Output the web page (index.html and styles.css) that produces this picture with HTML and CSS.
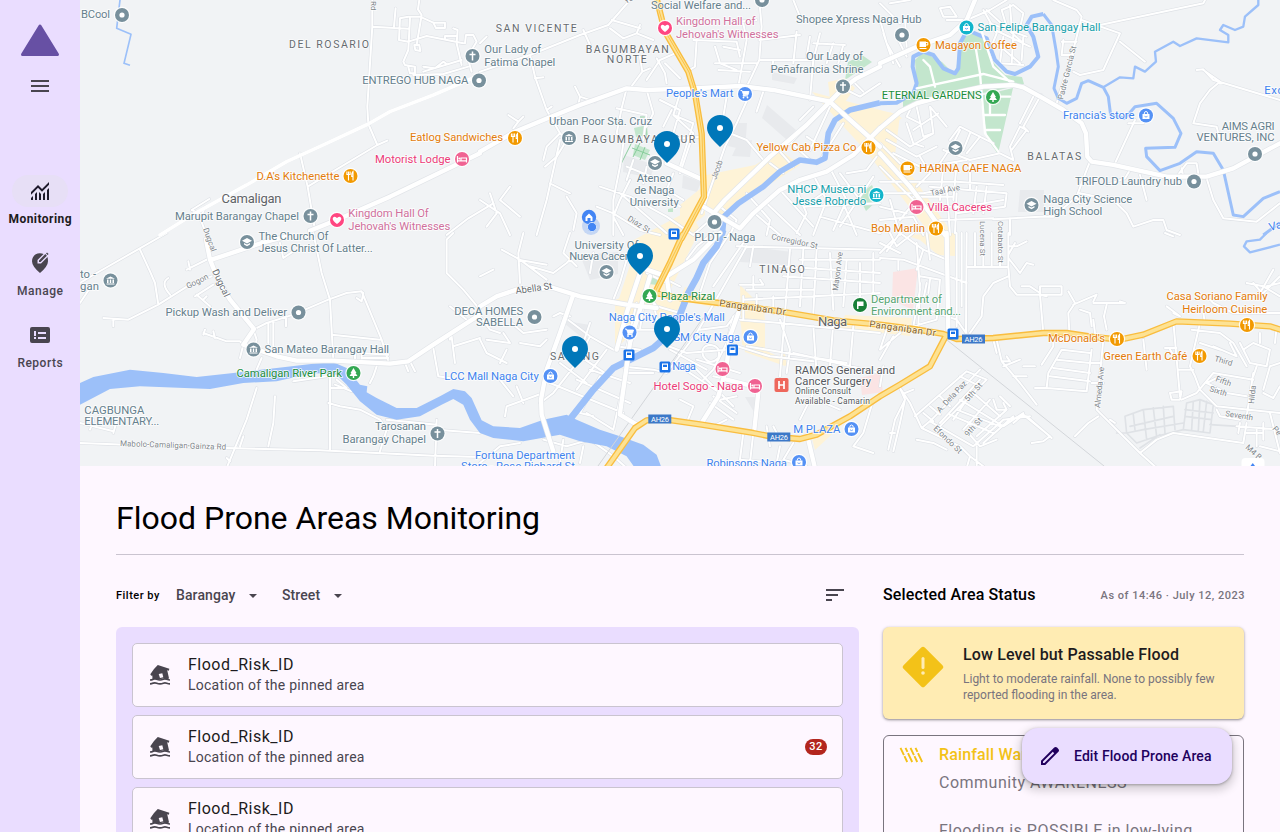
FILE: index.html
```html
<!DOCTYPE html>
<html lang="en">
<head>
<meta charset="utf-8">
<title>Flood Prone Areas Monitoring</title>
<link rel="stylesheet" href="styles.css">
</head>
<body>
<div class="app">
  <nav class="rail">
    <svg class="logo" width="40" height="34" viewBox="0 0 40 34"><path d="M20 3 37.5 31.500H2.500Z" fill="#6750a4" stroke="#6750a4" stroke-width="3" stroke-linejoin="round"/></svg>
    <svg class="menu" width="24" height="24" viewBox="0 0 24 24"><path d="M3 6h18v2H3zM3 11h18v2H3zM3 16h18v2H3z"/></svg>
    <div class="dest active"><span class="pill"><svg width="24" height="24" viewBox="0 0 24 24"><path d="M3 21v-2l2-2v4zM7 21v-6l2-2v8zM11 21v-8l2 2v6zM15 21v-6l2-2v8zM19 21V11l2-2v12zM3 15.800V13l7-7 4 4 7-7v2.800l-7 7-4-4z"/></svg></span><span class="dest-label">Monitoring</span></div>
    <div class="dest"><span class="pill"><svg width="24" height="24" viewBox="0 0 24 24"><path d="M12 22Q4 15.200 4 10.200A8 8 0 0 1 15.600 3L9.500 9v3.500H13L19.500 6Q20 8 20 10.200 20 15.200 12 22Z"/><path d="M11 11V9.400L17.300 3.100l1.600 1.600L12.600 11zM18 2.400l1-1 1.600 1.600-1 1z"/></svg></span><span class="dest-label">Manage</span></div>
    <div class="dest"><span class="pill"><svg width="24" height="24" viewBox="0 0 24 24"><path fill-rule="evenodd" d="M4 4h16a2 2 0 0 1 2 2v12a2 2 0 0 1-2 2H4a2 2 0 0 1-2-2V6a2 2 0 0 1 2-2ZM6 8v5h2V8zM6 14v2h2v-2zM10 9v2h8V9zM10 14v2h8v-2z"/></svg></span><span class="dest-label">Reports</span></div>
  </nav>

  <main class="main">
    <svg class="map" width="1200" height="466" viewBox="80 0 1200 466">
      <defs>
        <g id="minor">
          <path transform="translate(80 0) scale(.3333)" d="M877 0V80L862 320 865 372M877 80 985 86M947 25 942 80M865 372 892 435M922 422 892 435 683 560M660 460 683 560 705 690M335 630 388 597M335 630 365 645 375 622M355 640 372 685M1018 0 1014 28 1025 45 1010 135M960 55 985 50 1020 50 1060 68H1095V84H1068L1060 68M960 55 957 120 985 125 1040 108 1090 118 1150 130M990 55 985 150 970 185 975 195 1005 200V220H990L985 200M1120 85 1133 90 1130 130 1145 195M1095 118V108H1130M1155 130 1158 105 1180 105 1190 125 1175 150M1030 215 1145 180M1030 200 1065 205 1090 185 1100 192M1000 225 1090 222 1165 200M1165 180 1175 215M1003 135H1018L1021 153 1006 150ZM1100 705 1165 655 1240 610"/>
          <path transform="translate(480 0) scale(.3333)" d="M0 215 150 165 300 105 385 75 450 0M0 130 20 110M310 90 330 135M150 165 165 230 200 330 240 400M165 235 190 232M200 330 215 320M240 400 200 440 190 480M240 400 260 420 230 470 195 500M85 345 115 365 130 350M115 365 100 385M285 260 300 290 345 305M300 290 295 315M480 170 487 215 450 265M487 215 510 205M530 175 555 220 560 250M555 190 600 235M585 160 540 180 500 240M390 85 430 115 470 100 480 75M395 60 480 85M470 100 520 120M640 120 770 125 780 170M650 120 645 200 620 215M770 60 790 70 800 120 775 260M838 0 845 80 838 180 815 230 800 260M770 65 830 60M705 140 720 190 770 210M705 190 830 190M715 210 810 215M730 140 780 150M838 120 960 105M838 180 1000 180 990 300M950 95 940 190M990 110 980 170M1020 100 1000 180M1060 130 1040 190M1090 135 1075 190M1000 130 1095 135M880 180 875 215M940 0 960 50 1010 70M1100 270 1140 290 1200 250M1120 245 1150 275M440 265 425 325 410 400 430 430 420 500 400 600 400 705M410 325 500 345 490 420M500 270 520 340 500 380M540 300 600 330 580 400 560 490M600 280 580 345 640 370M580 345 640 400 600 520M640 370 600 500M600 415 670 410M575 330 550 380M740 290 730 350 705 400M815 270 770 370 735 440 700 540 665 640M850 275 830 335M1000 320 960 360M700 380 800 420 850 480M1050 320 990 450M1020 340 920 440M980 410 1040 450M930 425 990 480M900 455 940 500M870 490 910 520M1090 370 1020 480M1190 470 1160 510 1100 520M360 560 450 590 560 650 640 705M420 600 400 650 430 705M450 540 420 600M540 570 600 620M400 640 480 690 540 705M350 620 400 640M420 580 560 700M580 520 560 570 610 600M440 500 540 540M460 480 440 540M500 500 490 550M240 420 200 600 170 705M280 690 290 640 260 590M0 600 60 640 90 705M30 580 50 640 20 680M90 560 60 600 120 650M210 550 270 580M690 660 640 705M720 620 770 660 750 705M800 580 870 660 860 705M830 645 900 705M860 610 960 705M900 570 1000 680M940 550 980 640 950 700M1000 525 1040 600 1000 705M1050 505 1100 600 1060 690M970 620 1200 610M1020 650 1200 700M1030 560 1150 560M1080 520 1140 600M1060 560 1000 600M1090 610 1130 705M1180 530 1080 680"/>
          <path transform="translate(880 0) scale(.3333)" d="M0 60 20 130 60 200M30 10 90 0M0 10 60 70M10 100 40 190M50 110 80 170M75 55 80 140M180 25 210 20 230 50 190 50ZM200 60 260 60M260 60 330 30 380 0M310 30 350 100 330 150M365 30 400 15 430 40 420 85 380 80ZM390 15 395 80M330 70 440 110M345 90 450 140M350 130 420 190M370 110 360 190 430 195M400 100 395 190M430 110 425 180M320 30 430 130M520 0 590 30 605 50 580 150 530 310M660 75 970 10 975 0M605 60 720 100 670 210 600 225 580 215M720 125 795 185M545 125H590M550 120 545 165H580M630 485 620 510 590 590M765 360 705 490M745 370H790M750 510 735 535 680 555M780 525 800 600M950 210 970 208 1000 240 1200 300M970 210 1020 245 990 270 960 310 940 370 1010 380 1020 420M890 530 920 490 950 490 955 520M910 530 905 505M980 535 1000 600 1030 655 1130 665M1200 610 1130 665M100 310 80 350 120 370M110 320 130 410 160 400 150 320M80 370 100 430 130 440M150 320 200 380M175 340 100 390M210 420 240 380 280 400 340 430M240 390 220 430 180 490M270 400 250 450M300 410 260 460M190 450 270 480 360 460 400 480 390 440 420 380 440 390 395 450M480 290 430 380 445 395M460 290 420 370M465 285H485M0 430 60 490M20 420 110 470 170 440M40 460 140 510M20 390 90 440 160 400M120 470 150 520 110 560M140 500 260 480M0 545H230L370 555M0 580 130 580 230 560M190 500 180 600M230 490 220 600M270 490V570M100 590H220M130 620H250L370 600M150 560 380 580 375 620 230 640M200 560 210 705M230 580 225 700M290 560 280 640M320 560 310 640M180 660 340 655M340 658 480 650 520 650 590 590 600 610M600 580 700 600 740 640 760 680 820 660 850 660 860 690 900 705M0 620 80 640M0 660 100 650 130 705M30 600 60 705M100 610 60 660M390 655V705M0 500 100 600"/>
          <path transform="translate(80 233) scale(.3333)" d="M0 210 30 165M0 150 50 120 190 40 260 0M180 50 210 115 225 150 235 215M70 255 145 260 235 215 330 155 395 130M100 258V280M265 135Q240 150 270 185M390 75 320 110M325 85 330 110M345 190 400 155M350 185 390 220M380 190 370 200M700 0 725 120 750 200 760 380M520 290 560 270 640 245 745 200 800 180 845 175 905 320 925 385M830 195 845 205 850 180M755 305 900 320M565 270V330M580 265V340M618 250V280M370 300 440 325 480 325 500 345M375 290 370 305M400 295 405 315M520 290 530 320 520 360M490 335 480 375M840 360 925 365M845 380V360M825 360V385M845 375H925M1120 0 1100 20 1100 120 1150 170 1200 230M1110 220 1160 260M1115 310 1125 390M1110 300V320M1060 345 1075 430 1110 435M1120 340 1200 315M975 390 985 415M990 385 1005 415M890 400 880 430 870 450M640 445 740 430 770 415M750 430 750 650M750 465H800L770 440M765 455 815 475M745 510 780 520 840 530 900 560 920 590 900 655M1070 560 1065 705M920 560 1070 575M1070 590 1200 600M530 465 500 560 440 705M585 490 580 570 565 640M490 610 480 640M440 675 450 685M0 630 180 637 440 645 720 652 1060 668 1200 672M100 600 110 565 60 550M0 570 100 595M30 590 40 560M600 30 610 75 640 55M545 375 530 410"/>
          <path transform="translate(480 233) scale(.3333)" d="M130 0 115 60 120 150M65 50 120 80 200 140M150 100 220 120 260 90 290 60M115 80 200 95M0 130 40 110M270 0 250 60 290 100M340 60 330 120M440 80 420 150 400 200M0 250 30 290 60 300M20 320 90 330 70 300M95 270 130 300 200 290M120 330 180 340 200 320M0 320 20 360 80 390M60 390 80 350M250 250 330 310 400 350M220 250 240 240 270 250M330 270 310 330 290 390 220 480 180 510M330 310 300 370 390 430M380 350 290 470M240 390 320 450M210 450 430 540M290 440 450 510M330 410 450 450M190 480 80 520 75 550M110 460 130 510M60 440 100 490M320 540 400 590M430 450 400 590M360 430 300 540M340 550 300 540M420 400 520 410 560 420M440 420 520 420M410 340 480 350M470 210 440 340M490 220 480 290M520 210 540 300M500 180 530 220 600 240M470 290 540 290M540 130 600 160M500 120 560 150M700 0 650 40 620 80M750 0 690 90 660 180M800 40 720 180 650 300 560 420M790 30 700 160M660 290 740 280 770 240M770 40 1200 50M820 40 810 100M930 50 900 430M970 50 960 220M1010 50 1000 240M1050 60 1060 230M790 200 1200 180M780 155H850L840 140M800 170H1000M820 130V170M790 190V260M830 185V230M880 190V240M900 100 1200 120M910 130 1200 150M960 80H1200M1100 80 1090 220M1140 90V190M1180 60V180M760 250 740 330 700 410 670 440M780 260 900 270 1200 300M900 260 930 350 920 420M800 340 920 360 1100 390M740 330 870 370 1000 385M940 360 1200 420M1000 280 1010 420M1060 270 1050 400M1120 280 1110 400M690 335Q660 340 670 370 690 400 715 375 725 340 690 335M540 330 620 360 740 350M650 380 780 420M570 350 680 410M600 400 720 480M640 400 760 520M700 430 830 460M700 490 770 540M690 510 760 560M720 500 770 490M600 500 640 520 620 570M740 560 700 580M860 580 870 640M790 600 780 680 890 690 900 640M820 600 810 690M940 630 910 680 980 700M880 580 890 600M1000 480 960 560M1180 500 1150 600 1120 640 1180 660M1010 500 1080 530M190 620 260 640 330 620 400 670 440 705M250 620 240 690M310 640 300 690M0 690 60 640 120 630"/>
          <path transform="translate(880 233) scale(.3333)" d="M30 0 50 40 100 0M0 60 40 20M0 30 60 60M60 0 130 50 110 110M110 30 120 170 100 280M0 75 70 80 260 150M55 80V110M60 0 20 55M130 50 200 80M140 0 150 80M230 0V280M260 0 258 300 230 260 140 230M245 0V220M260 102H385M285 0V100M310 0V100M335 0V100M360 0V100M385 0V100L390 160 410 185 480 185 500 190M385 40H410L440 25M385 65 405 30M385 75 420 120 440 90 460 95M385 130 340 150 310 190 305 250 270 300M425 160H450L480 180M480 160H545V185H480ZM480 185 490 300M565 175 585 210 565 240 568 295M580 215 650 185 640 205M600 230 630 240 635 280M640 210H735L720 205M680 215 672 250 680 290M640 260 645 300M855 0 880 10M120 130 180 140 170 260 100 280M140 150 130 200M150 140 145 180M0 350 20 290M0 380 40 310M0 460 10 400M120 150 115 280M0 350 60 300M60 465 90 510 125 585 240 640M125 585 155 560 300 410M60 465 75 500 45 560 25 650M75 500 60 570 40 655M30 600H45M75 480 100 470M105 550 260 415 320 440 170 590M240 430 300 460M130 540 160 565M150 520 180 545M180 490 210 520M150 565 280 640 370 560M180 570 300 440M210 545 340 600M230 530 360 580M240 500 370 580 430 540M220 560 260 500M250 590 330 500M290 610 380 530M310 630 400 550M265 600 300 640 350 620M340 500 350 530 380 530 370 510M360 490 390 520M280 480 360 550M110 620 160 630 200 650M240 640 270 670 260 705M270 670 310 700M290 640 290 700M370 560 450 550M400 570 430 545 510 610 490 625 455 630M440 550 515 615M350 320 365 385 420 450 470 515M365 385H390L380 370M340 320 350 360M430 400 465 400M370 400 420 380M400 430 440 430M465 465H500L505 420 545 350 630 360M500 465 620 475 635 350M510 430 630 445M520 405 630 420M530 380 630 390M520 330V340L485 395M670 320 650 530 780 660 830 705M655 550 625 570 585 610M690 560 705 570M780 660 830 620 880 600 1090 630M635 450H670M635 390H665M790 320 800 410M880 265 900 490M900 250 880 240M970 240 975 270M935 290 1020 300 1060 330 1100 400M960 270 930 400 945 430 960 470 1010 520 1200 540M890 345 855 345M870 350 890 380M870 480 905 475 900 500 875 500ZM905 500 950 480 1000 420 1120 440M895 410H940M1000 340 1070 370 1050 330M1020 430 980 450 1040 480 1100 490M960 330 1020 350M1120 420 1100 550M1130 400 1120 430M1010 530 1020 550 1080 560M1080 330 1110 390 1160 400 1170 350 1120 330 1090 350 1080 330M1150 480 1180 495 1200 460M1150 470 1170 400 1200 390M1100 150 1150 160 1200 190M1120 150 1150 185M1180 110 1140 180M1160 160 1200 150M1150 180 1200 130M1190 280 1185 330M1070 580 1200 590M1080 570 1075 600M1100 570 1090 630M1130 590V640M1150 570V620M1100 600H1150M1170 540 1200 660M1140 640 1200 655M990 200 1000 210 1060 240 1200 240M860 220 900 250M1140 300V330"/>
        </g>
        <g id="grey-lanes">
          <path transform="translate(880 233) scale(.3333)" d="M735 550 790 530 880 520M735 550 740 600 790 590 910 570M710 600 740 600 770 630M760 545 765 590M790 530 800 620M820 525 830 610M850 520 855 600M880 520 885 590M920 510 960 500 1000 515 990 600M920 510 910 590 990 600M940 505 935 590M960 500 955 595M980 505 970 595M990 575 1075 580M770 630 830 610 910 590M780 645 840 605M750 580 880 550M915 550 995 560M915 530 1000 540"/>
        </g>
        <g id="major">
          <path transform="translate(80 0) scale(.3333)" stroke-width="11" d="M240 705 345 640 500 555 620 485 740 430 865 372 930 335 1060 285 1200 225"/>
          <path transform="translate(80 0) scale(.3333)" d="M690 692 770 660 930 590 1200 460"/>
          <path transform="translate(480 0) scale(.3333)" d="M0 455 105 395 190 360 300 315 440 265 500 270 640 265 780 258 880 270 1050 305 1090 265 1130 235 1200 200M1050 305 980 375 870 470 735 600 700 640M1055 310 1200 440M670 620 780 685 820 640 900 570 960 540 1040 515 1120 465 1200 385M560 490 670 540"/>
          <path transform="translate(880 0) scale(.3333)" d="M0 190 110 140 210 105 260 60 285 0M0 460 90 560 150 640 195 705M0 385 60 335 110 310 240 275 310 260 400 255 430 262 490 295 550 330 605 370 618 400 622 470 635 485 700 495 860 530 980 530 1060 505 1125 470 1200 430"/>
          <path transform="translate(80 233) scale(.3333)" d="M395 80 545 30 620 10M390 80 410 130 450 200 522 288 490 335M490 335 590 370 650 383 760 383 930 392 985 385 1060 335 1200 245M390 80 378 20"/>
          <path transform="translate(480 233) scale(.3333)" d="M0 220 50 190 110 170 220 165 300 190 440 215 530 225M280 185 240 300 200 410 183 500 185 545 220 655M480 120 440 240 410 350M510 130 450 330 420 540M500 110 560 130 640 80 720 0M560 130 570 200M775 240 750 310 740 400 715 490 665 570M835 480 822 600M420 545 470 575M985 620 1005 705M740 440 800 455"/>
          <path transform="translate(880 233) scale(.3333)" d="M200 0 205 290"/>
        </g>
        <g id="highway">
          <path transform="translate(480 0) scale(.3333)" d="M531 0 555 95 625 215 645 280 665 400 672 590 605 715"/>
          <path transform="translate(480 233) scale(.3333)" d="M608 5 570 90 525 180 600 195 740 213 900 235 1060 262 1200 275 1300 288 1390 303 1430 318 1540 315 1690 300 1760 300 1840 312 1920 320 1990 305 2090 265 2250 272 2370 280 2420 296M1397 310 1350 400 1260 455 1200 490 1110 550 1010 605 960 618 870 610 820 600 665 575 545 558 500 562 465 585 380 705"/>
        </g>
        <g id="m-dot"><circle r="8.200" fill="#fff" opacity=".85"/><circle r="7"/><circle r="2.600" fill="#fff"/></g>
        <g id="m-base"><circle r="8.200" fill="#fff" opacity=".85"/><circle r="7"/></g>
        <g id="m-cross"><use href="#m-base"/><path d="M0-4.500V4.500M-3-1.500H3" stroke="#fff" stroke-width="1.500"/></g>
        <g id="m-food"><use href="#m-base"/><path d="M-2-4.500V4.500M-3.600-4.500V-1.500H-.400V-4.500M2.500 4.500V-4.500Q.800-3 1.200.500H2.500" fill="none" stroke="#fff" stroke-width="1.100"/></g>
        <g id="m-bed"><use href="#m-base"/><path d="M-4.500-3V3.500M-4.500 1.800H4.500M4.500 3.500V-1H-1V1.500" fill="none" stroke="#fff" stroke-width="1.200"/><circle cx="-2.600" cy="-.500" r="1.100" fill="#fff"/></g>
        <g id="m-cup"><use href="#m-base"/><path d="M-4-3.500H2.500V2H-4ZM-4 3H3V4H-4Z" fill="#fff"/><path d="M2.500-2.500H4.300V0H2.500" fill="none" stroke="#fff"/></g>
        <g id="m-heart"><use href="#m-base"/><path d="M0 4Q-4.500.800-4.300-1.500-3.500-4.500 0-2 3.500-4.500 4.300-1.500 4.500.800 0 4Z" fill="#fff"/></g>
        <g id="m-cart"><use href="#m-base"/><path d="M-4.500-3.500H-3L-1.500.800H3L4-2.500H-2.500M-1.500.800-2 2H3" fill="#fff" stroke="#fff" stroke-width=".900"/><circle cx="-1.500" cy="3.500" r=".900" fill="#fff"/><circle cx="2.500" cy="3.500" r=".900" fill="#fff"/></g>
        <g id="m-bag"><use href="#m-base"/><path d="M-3.500-1.500H3.500V3.500H-3.500Z" fill="#fff"/><path d="M-1.800-1.500Q-1.800-4 0-4T1.800-1.500" fill="none" stroke="#fff"/><path d="M-1.500.800Q0 2.300 1.500.800" fill="none" stroke="#5491f5" stroke-width=".800"/></g>
        <g id="m-tree"><use href="#m-base"/><path d="M0-5 3 0H2L4 3H.700V5H-.700V3H-4L-2 0H-3Z" fill="#fff"/></g>
        <g id="m-school"><use href="#m-base"/><path d="M0-4 5-1.200 0 1.500-5-1.200ZM-3 1 0 2.600 3 1V2.600L0 4.300-3 2.600Z" fill="#fff"/></g>
        <g id="m-museum"><use href="#m-base"/><path d="M-4.500-1.800 0-4 4.500-1.800ZM-4 3H4V4H-4ZM-3.500-1H-2V2.500H-3.500ZM-.700-1H.700V2.500H-.700ZM2-1H3.500V2.500H2Z" fill="#fff"/></g>
        <g id="m-bus"><rect x="-5.500" y="-5.500" width="11" height="11" rx="1.500" fill="#1a73e8"/><path d="M-3-3.500H3V3H-3Z" fill="#fff"/><path d="M-2-2.300H2V0H-2Z" fill="#1a73e8"/></g>
        <g id="pin"><path d="M0 0C-6-6-13-12-13-19A13 13 0 0 1 13-19C13-12 6-6 0 0Z" fill="#0077b9"/><circle cy="-19" r="3" fill="#fff"/></g>
      </defs>

      <rect x="80" width="1200" height="466" fill="#f1f3f5"/>
      <!-- institutional and commercial blocks -->
      <g fill="#e8eaed">
        <path d="M772 72 797 78 794 84 772 80ZM762 118 767 105 796 130 787 140ZM735 123 747 123 745 150 728 146ZM738 143 752 140 750 157 732 156ZM1020 190H1044V212H1018ZM744 246 792 252 790 265 740 262ZM624 155 655 165 650 178 623 172ZM683 175 701 182 697 192 682 188ZM580 255 618 252 618 274 590 280ZM745 397 758 397 754 412ZM560 320 590 325 585 340Z"/>
      </g>
      <g fill="#fef3d7">
        <path d="M812 92 880 110 900 115 895 155 915 180 950 230 935 240 900 195 865 150ZM828 82 845 78 855 88 845 102 830 98ZM706 175 755 165 780 150 800 165 745 200 720 220 700 205ZM680 205 705 185 705 215 680 235ZM630 242 690 210 700 230 670 290 655 295 625 315 612 320 630 265ZM640 300 690 300 665 320ZM740 320 765 318 765 350 785 360 785 366 745 352ZM615 300 640 290 635 330 615 350ZM685 287 720 300 715 308 680 300ZM905 235 955 233 955 256 938 255 920 240ZM845 315 912 318 910 336 840 328ZM812 438 842 418 842 425 815 450ZM770 360 785 353 787 366ZM890 112 902 118 885 130ZM740 285 765 310 762 350 742 345Z"/>
      </g>
      <path d="M893 272 918 268 913 310 892 300ZM860 378 880 373 883 392 862 395Z" fill="#fbe4e4"/>
      <g fill="#c3e6cd">
        <path d="M903 99 917 92 915 60 923 52 942 62 955 75 962 37 972 33 985 40 993 62 1005 75 1022 77 1024 84 990 92 940 98 903 108ZM980 96 1013 88 998 154 988 140ZM848 62 862 55 872 62 845 80ZM634 128 647 125 648 135 636 137ZM635 144 650 150 645 160 633 155ZM858 195 872 185 878 200 866 211ZM651 278 658 277 657 285 649 284ZM668 209 673 208 673 212 668 212Z"/>
      </g>
      <path d="M640 117 646 117 646 140M620 166 632 142M632 148 650 155M640 143 633 157M645 147 640 160" fill="none" stroke="#81c995" stroke-width=".900"/>

      <!-- minor roads -->
      <g fill="none" stroke-linejoin="round" stroke-linecap="round">
        <use href="#minor" stroke="#dde0e5" stroke-width="9.500"/>
        <use href="#grey-lanes" stroke="#dfe2e6" stroke-width="5"/>
        <use href="#minor" stroke="#fff" stroke-width="6"/>
      </g>

      <!-- water -->
      <g fill="#9cc0f9">
        <path transform="translate(80 233) scale(.3333)" d="M0 450 40 432 150 410 250 420 350 432 460 420 590 405 700 392 760 388 800 405 840 455 862 460 860 478 890 495 950 525 1010 525 1080 490 1120 468 1155 475 1175 495 1205 562 1240 580 1320 585 1390 560 1460 545 1490 560 1560 590 1620 610 1690 635 1730 665 1745 705H1665L1640 670 1580 640 1500 625 1440 605 1330 625 1240 615 1200 600 1170 560 1150 515 1120 498 1085 515 1020 550 950 560 890 545 840 505 800 455 770 425 700 420 590 445 490 450 390 468 180 460 90 468 0 515Z"/>
      </g>
      <g fill="none" stroke="#9cc0f9" stroke-linejoin="round">
        <path transform="translate(80 0) scale(.3333)" stroke-width="5" d="M120 0 110 85 153 103 132 190 150 196"/>
        <path transform="translate(480 0) scale(.3333)" stroke-width="17" d="M727 705 732 650 775 610 850 560 900 515 960 480 1010 487 1035 475 1045 400 1065 360 1110 330 1200 308"/>
        <path transform="translate(480 233) scale(.3333)" stroke-width="20" d="M730-10 710 40 670 90 650 135 625 180 600 245 560 310 520 345 460 375 400 405 340 470 265 565"/>
        <path transform="translate(880 0) scale(.3333)" stroke-width="12" d="M0 310 50 308 100 280 110 250 98 200 100 170 130 155 160 165 190 205 225 220 235 205 240 130 262 90 320 115 345 180 380 215 405 222 450 200 475 170 460 110 440 75 455 50 490 42"/>
        <path transform="translate(880 0) scale(.3333)" stroke-width="9" d="M490 42 515 75 528 150 535 200 522 265 535 295 560 310 590 295 605 250 625 242 670 262 685 290 692 345 735 355 765 320 830 310 880 355 903 400 885 442 797 445 800 470 840 512 900 490 950 455 1000 460 1030 510 1050 600 1060 645 1090 650 1150 595 1200 575M1150 705 1200 668"/>
        <path transform="translate(880 0) scale(.3333)" stroke-width="7" d="M670 262 720 232 760 235 765 200 795 215 828 185 825 155 880 125 900 138 950 115 1045 127 1045 105 1020 90 1030 75 1065 90 1090 80 1095 50 1135 15V0"/>
        <path transform="translate(880 233) scale(.3333)" stroke-width="7" d="M1160 0 1140 20 1100 25 1092 40 1110 58 1200 35"/>
      </g>

      <!-- main roads -->
      <g fill="none" stroke-linejoin="round" stroke-linecap="round">
        <path transform="translate(880 0) scale(.3333)" stroke="#fff" stroke-width="7" d="M130 180 150 200 165 260M285 130 300 220 315 400 355 455M300 80 340 200 400 255M110 265 310 222 400 245M310 345 375 345M330 290V340M390 290H360M320 390H360"/>
        <path d="M942 336 1104 466M703 318 598 466" stroke="#d3d6da" stroke-width="1"/>
        <use href="#major" stroke="#e2e5e9" stroke-width="17"/>
        <use href="#major" stroke="#fff" stroke-width="13"/>
        <use href="#highway" stroke="#f9bd3f" stroke-width="19"/>
        <use href="#highway" stroke="#fde293" stroke-width="11"/>
        <path d="M656 0 665 31 689 72 696 95 702 134 704 197 682 238 655 292" stroke="#f9bd3f" stroke-width=".900"/>
      </g>

      <!-- street names -->
      <g class="street">
        <text transform="translate(371 1) rotate(90)">Rd</text>
        <text transform="translate(626 4) rotate(-30)">Ya</text>
        <text transform="translate(203 229) rotate(70)">Dugcal</text>
        <text transform="translate(212 271) rotate(65)" class="dark">Dugcal</text>
        <text transform="translate(188 289) rotate(-27)">Gogon</text>
        <text x="120" y="446" textLength="106" transform="rotate(2 120 446)">Mabolo-Camaligan-Gainza Rd</text>
        <text transform="translate(516 294) rotate(-8)" textLength="37" class="dark">Abella St</text>
        <text transform="translate(627 220) rotate(32)" textLength="25">Diaz St</text>
        <text transform="translate(716 180) rotate(-70)" textLength="20">Jacob</text>
        <text transform="translate(1063 100) rotate(-76)" textLength="55">Padre Garcia St</text>
        <text transform="translate(931 196) rotate(-12)" textLength="30">Taal Ave</text>
        <text transform="translate(980 221) rotate(90)" textLength="35">Lucena St</text>
        <text transform="translate(998 221) rotate(90)" textLength="42">Cotabato St</text>
        <text transform="translate(771 239) rotate(12)" textLength="47">Corregidor St</text>
        <text transform="translate(838 291) rotate(-83)" textLength="39">Mayon Ave</text>
        <text transform="translate(1100 408) rotate(-84)" textLength="41">Almeda Ave</text>
        <text transform="translate(940 413) rotate(-47)" textLength="40">A. Dela Paz</text>
        <text transform="translate(968 402) rotate(-48)" textLength="22">5th St</text>
        <text transform="translate(968 437) rotate(-48)" textLength="22">9th St</text>
        <text transform="translate(933 429) rotate(44)" textLength="36">Efondo St</text>
        <text transform="translate(1214 361) rotate(16)">Third</text>
        <text transform="translate(1215 381) rotate(20)">Fifth</text>
        <text transform="translate(1209 391) rotate(18)">Sixth</text>
        <text transform="translate(1225 416) rotate(9)" textLength="28">Seventh</text>
        <text transform="translate(1254 404) rotate(-84)">Hilda</text>
        <text transform="translate(1245 448) rotate(42)">M4 B</text>
        <text transform="translate(1272 429) rotate(50)">Pe</text>
        <text transform="translate(719 306) rotate(8)" textLength="67" class="brown">Panganiban Dr</text>
        <text transform="translate(869 327) rotate(8)" textLength="67" class="brown">Panganiban Dr</text>
      </g>

      <!-- districts -->
      <g class="district">
        <text x="289" y="47.500" textLength="80">DEL ROSARIO</text>
        <text x="495.700" y="31.800" textLength="81">SAN VICENTE</text>
        <text x="585.700" y="52.500" textLength="83">BAGUMBAYAN</text>
        <text x="606.700" y="63" textLength="40">NORTE</text>
        <text x="583.300" y="143" textLength="112">BAGUMBAYAN SUR</text>
        <text x="1027.300" y="160" textLength="54">BALATAS</text>
        <text x="759.300" y="273" textLength="45.500">TINAGO</text>
        <text x="550" y="360" textLength="49">SABANG</text>
        <text class="town" x="221.500" y="203" textLength="60">Camaligan</text>
        <text class="town" x="818" y="326" textLength="29">Naga</text>
      </g>

      <!-- place names -->
      <g class="place slate">
        <text x="81" y="18" textLength="29">BCool</text>
        <text x="362.300" y="84" textLength="106">ENTREGO HUB NAGA</text>
        <text x="175" y="219.500" textLength="124">Marupit Barangay Chapel</text>
        <text x="258.500" y="240" textLength="70">The Church Of</text>
        <text x="258.300" y="252" textLength="114.500">Jesus Christ Of Latter...</text>
        <text x="80" y="278" textLength="16">to -</text>
        <text x="80" y="290" textLength="19">gan</text>
        <text x="165.500" y="316" textLength="121.500">Pickup Wash and Deliver</text>
        <text x="454.300" y="314.500" textLength="69">DECA HOMES</text>
        <text x="476" y="325.500" textLength="47">SABELLA</text>
        <text x="264.600" y="353" textLength="124.500">San Mateo Barangay Hall</text>
        <text x="84.300" y="413.500" textLength="60">CAGBUNGA</text>
        <text x="84.300" y="425" textLength="75">ELEMENTARY...</text>
        <text x="375" y="430" textLength="51">Tarosanan</text>
        <text x="342.500" y="442.500" textLength="83.500">Barangay Chapel</text>
        <text x="651" y="9.300" textLength="100">Social Welfare and...</text>
        <text x="484.300" y="53.300" textLength="57">Our Lady of</text>
        <text x="484.300" y="65.500" textLength="71">Fatima Chapel</text>
        <text x="796" y="22.500" textLength="125.500">Shopee Xpress Naga Hub</text>
        <text x="806" y="60.300" textLength="57">Our Lady of</text>
        <text x="770.500" y="72.700" textLength="93">Peñafrancia Shrine</text>
        <text x="549" y="125.300" textLength="103">Urban Poor Sta. Cruz</text>
        <text x="636.700" y="181.500" textLength="35">Ateneo</text>
        <text x="634.300" y="194" textLength="40">de Naga</text>
        <text x="629.800" y="205.500" textLength="49">University</text>
        <text x="1221.700" y="130" textLength="53">AIMS AGRI</text>
        <text x="1196.500" y="140.500" textLength="78">VENTURES, INC</text>
        <text x="1075" y="185.300" textLength="107">TRIFOLD Laundry hub</text>
        <text x="1043.300" y="203" textLength="89">Naga City Science</text>
        <text x="1043.300" y="214.800" textLength="59">High School</text>
        <text x="574.500" y="249" textLength="64">University Of</text>
        <text x="569.300" y="260" textLength="70">Nueva Caceres</text>
        <text x="694.300" y="241" textLength="61">PLDT - Naga</text>
      </g>
      <g class="place orange">
        <text x="410" y="141" textLength="93">Eatlog Sandwiches</text>
        <text x="256.500" y="180" textLength="83">D.A's Kitchenette</text>
        <text x="756.500" y="151" textLength="100">Yellow Cab Pizza Co</text>
        <text x="935" y="49" textLength="82">Magayon Coffee</text>
        <text x="919.300" y="172" textLength="102">HARINA CAFE NAGA</text>
        <text x="871" y="231.700" textLength="54">Bob Marlin</text>
        <text x="1048" y="342.300" textLength="57">McDonald's</text>
        <text x="1103.300" y="360" textLength="84">Green Earth Café</text>
        <text x="1166.500" y="300" textLength="101">Casa Soriano Family</text>
        <text x="1182.300" y="312.500" textLength="85">Heirloom Cuisine</text>
      </g>
      <g class="place pink">
        <text x="375" y="162.500" textLength="75.500">Motorist Lodge</text>
        <text x="927.500" y="210.700" textLength="64.500">Villa Caceres</text>
        <text x="653.500" y="390" textLength="90">Hotel Sogo - Naga</text>
      </g>
      <g class="place mauve">
        <text x="348.300" y="217.300" textLength="80.500">Kingdom Hall Of</text>
        <text x="348.300" y="230" textLength="102">Jehovah's Witnesses</text>
        <text x="676" y="25.300" textLength="79.500">Kingdom Hall of</text>
        <text x="676" y="37.500" textLength="102.500">Jehovah's Witnesses</text>
      </g>
      <g class="place blue">
        <text x="666" y="97.300" textLength="67.500">People's Mart</text>
        <text x="1063" y="118.500" textLength="71.500">Francia's store</text>
        <text x="1264.300" y="94" textLength="19">Exc</text>
        <text x="608.700" y="320.500" textLength="116">Naga City People's Mall</text>
        <text x="673.500" y="341" textLength="66.500">SM City Naga</text>
        <text x="672.300" y="370" textLength="23.500">Naga</text>
        <text x="444.300" y="379.700" textLength="94.500">LCC Mall Naga City</text>
        <text x="475" y="459" textLength="100">Fortuna Department</text>
        <text x="461" y="470" textLength="114">Store - Rose Richard St</text>
        <text x="793.300" y="432.500" textLength="47">M PLAZA</text>
        <text x="706.500" y="466.500" textLength="80.500">Robinsons Naga</text>
        <text x="1270" y="231" transform="rotate(-15 1270 231)">Val</text>
      </g>
      <g class="place green">
        <text x="881.700" y="99.300" textLength="100">ETERNAL GARDENS</text>
        <text x="236.500" y="377" textLength="105.500">Camaligan River Park</text>
        <text x="660.700" y="300.300" textLength="54.500">Plaza Rizal</text>
        <text class="soft" x="871" y="303" textLength="71">Department of</text>
        <text class="soft" x="871" y="315" textLength="90">Environment and...</text>
      </g>
      <g class="place teal">
        <text x="977.500" y="30.500" textLength="123">San Felipe Barangay Hall</text>
        <text x="787.300" y="193" textLength="79">NHCP Museo ni</text>
        <text x="792.300" y="204.500" textLength="74">Jesse Robredo</text>
      </g>
      <g class="place ink">
        <text x="795" y="373.500" textLength="100">RAMOS General and</text>
        <text x="795" y="384.500" textLength="76">Cancer Surgery</text>
        <text class="note" x="795" y="394" textLength="56">Online Consult</text>
        <text class="note" x="795" y="404" textLength="75">Available - Camarin</text>
      </g>

      <!-- markers -->
      <g fill="#78909c">
        <use href="#m-dot" x="122" y="15"/><use href="#m-cross" x="472.500" y="56"/><use href="#m-dot" x="479" y="80.500"/>
        <use href="#m-cross" x="310.500" y="216"/><use href="#m-school" x="247" y="242"/><use href="#m-museum" x="110.500" y="280.500"/>
        <use href="#m-dot" x="298.500" y="312.500"/><use href="#m-museum" x="253.500" y="349.500"/><use href="#m-cross" x="437.500" y="433.500"/>
        <use href="#m-dot" x="762" y="0"/><use href="#m-museum" x="569" y="138"/><use href="#m-school" x="655" y="163"/>
        <use href="#m-cross" x="843" y="86.500"/><use href="#m-dot" x="902" y="35"/><use href="#m-school" x="955.500" y="148"/>
        <use href="#m-school" x="1031.500" y="205"/><use href="#m-dot" x="1194" y="181.500"/><use href="#m-dot" x="1255" y="154"/>
        <use href="#m-dot" x="714.500" y="222"/><use href="#m-school" x="606.500" y="272"/><use href="#m-dot" x="534.500" y="317"/>
      </g>
      <g fill="#f29900">
        <use href="#m-food" x="515" y="138"/><use href="#m-food" x="350.500" y="176"/><use href="#m-food" x="868.500" y="147.500"/>
        <use href="#m-cup" x="923.500" y="45"/><use href="#m-cup" x="907.500" y="168.500"/><use href="#m-food" x="936" y="228.500"/>
        <use href="#m-food" x="1117" y="339"/><use href="#m-food" x="1199.500" y="356"/><use href="#m-food" x="1247" y="325"/>
      </g>
      <g fill="#f06292"><use href="#m-bed" x="462" y="159"/><use href="#m-bed" x="916.500" y="207"/><use href="#m-bed" x="722.500" y="369"/><use href="#m-bed" x="755" y="386"/></g>
      <g fill="#ff4681"><use href="#m-heart" x="337" y="220"/><use href="#m-heart" x="665" y="28"/></g>
      <g fill="#5491f5">
        <use href="#m-cart" x="745" y="94"/><use href="#m-cart" x="629.500" y="332.500"/><use href="#m-bag" x="1146" y="115.500"/>
        <use href="#m-bag" x="750.500" y="337"/><use href="#m-bag" x="550.500" y="376"/><use href="#m-bag" x="851.500" y="429"/><use href="#m-bag" x="799" y="462"/>
      </g>
      <g fill="#34a853"><use href="#m-tree" x="993" y="97"/><use href="#m-tree" x="353.500" y="373"/><use href="#m-tree" x="649.500" y="296"/></g>
      <g fill="#12b5cb"><use href="#m-bag" x="966.500" y="27.500"/><use href="#m-museum" x="876.500" y="195"/></g>
      <g fill="#188038"><use href="#m-base" x="860" y="305"/><path d="M857 301.500H863.500V306H858.500V309H857Z" fill="#fff"/></g>
      <use href="#m-bus" x="674" y="234"/><use href="#m-bus" x="732.500" y="350"/><use href="#m-bus" x="629" y="355"/><use href="#m-bus" x="665" y="367"/><use href="#m-bus" x="953" y="334"/>
      <rect x="774.500" y="378" width="14" height="14" rx="2" fill="#ee675c"/><path d="M779 381V389M784 381V389M779 385H784" stroke="#fff" stroke-width="1.700"/>
      <circle cx="591" cy="226" r="9" fill="#4285f4" opacity=".25"/>
      <circle cx="589" cy="217" r="7.200" fill="#4285f4"/><path d="M585.500 217 589 213.500 592.500 217V221H590.500V218H587.500V221H585.500Z" fill="#fff"/>
      <circle cx="592" cy="227" r="4.600" fill="#4285f4" stroke="#cfe0fb"/>
      <g class="shield">
        <rect x="648.300" y="414.500" width="23" height="9"/><text x="660" y="422" textLength="18">AH26</text>
        <rect x="767.300" y="432.500" width="23" height="9"/><text x="779" y="440" textLength="18">AH26</text>
        <rect x="962" y="334.500" width="23" height="9"/><text x="973.500" y="342" textLength="18">AH26</text>
      </g>
      <rect x="1241.500" y="458" width="23" height="20" rx="4" fill="#fff"/><path d="M1252.800 463 1255 466H1250.500Z" fill="#4285f4"/>

      <!-- flood prone areas -->
      <use href="#pin" x="667" y="163"/><use href="#pin" x="720" y="147"/><use href="#pin" x="640" y="275"/><use href="#pin" x="667" y="348"/><use href="#pin" x="575" y="368"/>
    </svg>

    <section class="content">
      <h1>Flood Prone Areas Monitoring</h1>
      <div class="columns">
        <div class="areas">
          <div class="filters">
            <span class="filter-by">Filter by</span>
            <span class="select">Barangay <i></i></span>
            <span class="select street-select">Street <i></i></span>
            <svg class="sort" width="24" height="24" viewBox="0 0 24 24"><path d="M3 6h18v2H3zM3 11h12v2H3zM3 16h6v2H3z"/></svg>
          </div>
          <svg width="0" height="0" class="sprite"><symbol id="flood" viewBox="0 0 24 24"><path fill-rule="evenodd" d="M9.800 2.100 21.300 5.700 20.900 7.700 19.200 7.300 21 15.200Q19.500 17 17.500 16.200 15 15 12.500 16.300 10.500 17.200 8.500 16L4.500 16 4.300 12.500 3.200 12.800 2.300 11.200 6 6ZM10.700 11 12 15 15.300 14.200 14.300 10.200Z"/><path d="M2 17Q3.700 17 5.300 16.200 7 15.600 8.700 16.300 10.300 17 12 17T15.300 16.300 18.700 16.300 22 17M2 20.900Q3.700 20.900 5.300 20.100 7 19.500 8.700 20.200 10.300 20.900 12 20.900T15.300 20.200 18.700 20.200 22 20.900" fill="none" stroke="#49454f" stroke-width="1.700"/></symbol></svg>
          <div class="list">
            <div class="item"><svg width="24" height="24"><use href="#flood"/></svg><div><b>Flood_Risk_ID</b><p>Location of the pinned area</p></div></div>
            <div class="item"><svg width="24" height="24"><use href="#flood"/></svg><div><b>Flood_Risk_ID</b><p>Location of the pinned area</p></div><span class="badge">32</span></div>
            <div class="item"><svg width="24" height="24"><use href="#flood"/></svg><div><b>Flood_Risk_ID</b><p>Location of the pinned area</p></div></div>
          </div>
        </div>
        <aside class="status">
          <div class="status-head"><h2>Selected Area Status</h2><time>As of 14:46 · July 12, 2023</time></div>
          <div class="alert">
            <svg width="42" height="42" viewBox="0 0 42 42"><rect x="6" y="6" width="30" height="30" rx="2.500" transform="rotate(45 21 21)" fill="#f3c218"/><path d="M21 12.500V21.500" stroke="#ffecb3" stroke-width="3" stroke-linecap="round"/><circle cx="21" cy="27" r="1.800" fill="#ffecb3"/></svg>
            <div><h3>Low Level but Passable Flood</h3><p>Light to moderate rainfall. None to possibly few reported flooding in the area.</p></div>
          </div>
          <div class="warning">
            <svg width="24" height="16" viewBox="0 0 24 16"><g fill="none" stroke="#f3c218" stroke-width="1.900"><path d="M1.500.800 8.200 15M11.500.800 18.200 15" stroke-dasharray="8 1.300"/><path d="M6.500.800 13.200 15M16.500.800 23.200 15" stroke-dasharray="4.500 1.300 10"/></g></svg>
            <div><h4>Rainfall Warning</h4><p>Community AWARENESS<br><br>Flooding is POSSIBLE in low-lying</p></div>
          </div>
        </aside>
      </div>
    </section>
  </main>
  <button class="fab"><svg width="24" height="24" viewBox="0 0 24 24"><path fill-rule="evenodd" d="M3 21v-4.250L16.200 3.570Q16.800 3 17.600 3T19.050 3.600L20.400 5Q21 5.600 21 6.400T20.400 7.850L7.250 21ZM5 19H6.400L16.200 9.200 14.800 7.800 5 17.600Z"/></svg>Edit Flood Prone Area</button>
</div>
</body>
</html>
```
FILE: styles.css
```css
* { box-sizing: border-box; }
body { margin: 0; font-family: Roboto, "Liberation Sans", sans-serif; background: #fef7ff; color: #1d1b20; }
h1, h2, h3, h4, p { margin: 0; font-weight: 400; }
.app { position: relative; display: flex; width: 1280px; height: 832px; overflow: hidden; }
svg { display: block; flex: none; }

.rail { width: 80px; flex: none; height: 832px; background: #eaddff; display: flex; flex-direction: column; align-items: center; color: #49454f; fill: #49454f; }
.logo { margin-top: 23px; }
.menu { margin-top: 17px; }
.dest { height: 56px; margin-bottom: 16px; display: flex; flex-direction: column; align-items: center; gap: 4px; font-size: 12px; line-height: 16px; font-weight: 500; letter-spacing: .5px; }
.dest.active { margin-top: 77px; color: #1d1b20; fill: #1d192b; font-weight: 700; }
.pill { width: 56px; height: 32px; border-radius: 16px; display: flex; align-items: center; justify-content: center; }
.active .pill { background: #e7dff6; }
.dest-label { margin-right: -.5px; }
.active .dest-label { letter-spacing: .45px; }

.main { width: 1200px; flex: none; }
.map { overflow: hidden; }
.place { font-size: 11.3px; stroke: #fff; stroke-width: 1.800px; stroke-opacity: .75; paint-order: stroke; stroke-linejoin: round; }
.district { font-size: 10.500px; fill: #666b70; stroke: #fff; stroke-width: 1.500px; stroke-opacity: .7; paint-order: stroke; }
.town { font-size: 13px; fill: #5f6368; }
.slate { fill: #66808d; }
.orange { fill: #e37b0b; }
.pink { fill: #ec3b79; }
.mauve { fill: #d0709c; }
.blue { fill: #3f83ee; }
.green { fill: #1e8e3e; }
.soft { fill: #57a573; }
.teal { fill: #16a0ab; }
.ink { fill: #555a5f; }
.note { font-size: 8.500px; }
.street { font-size: 8px; fill: #80868b; stroke: #fff; stroke-width: 1.500px; stroke-opacity: .7; paint-order: stroke; }
.street .dark { font-size: 9.500px; fill: #6a6f74; }
.street .brown { font-size: 9.500px; fill: #80602c; }
.shield { font-size: 7.500px; fill: #fff; text-anchor: middle; }
.shield rect { fill: #3c78c8; }

.content { padding: 32px 36px 0; }
h1 { font-size: 32px; line-height: 40px; height: 57px; margin-bottom: 24px; color: #000; border-bottom: 1px solid #cac4d0; }
.columns { display: grid; grid-template-columns: 743px 361px; gap: 24px; }
.filters { display: flex; align-items: center; height: 32px; margin-bottom: 16px; padding-right: 12px; }
.filter-by { font-size: 11px; font-weight: 500; letter-spacing: .5px; color: #000; width: 60px; }
.select { display: flex; align-items: center; font-size: 14px; font-weight: 500; letter-spacing: .1px; color: #49454f; width: 106px; gap: 14px; }
.select i { border: 4px solid transparent; border-top: 4px solid #49454f; border-bottom: 0; margin-top: 1px; }
.sort { margin-left: auto; fill: #49454f; }
.sprite { position: absolute; }
.list { background: #eaddff; border-radius: 6px; padding: 16px; display: flex; flex-direction: column; gap: 8px; height: 300px; }
.item { flex: none; height: 64px; background: #fef7ff; border: 1px solid #cac4d0; border-radius: 5px; padding: 0 15px; display: flex; align-items: center; gap: 16px; }
.item svg { fill: #49454f; }
.item div { margin-top: -3px; }
.item b { display: block; font-size: 16px; line-height: 24px; font-weight: 400; letter-spacing: .5px; }
.item p { font-size: 14px; line-height: 20px; letter-spacing: .25px; color: #49454f; margin-top: -2px; }
.badge { margin-left: auto; width: 22px; height: 16px; border-radius: 8px; background: #b3261e; color: #fff; font-size: 11px; line-height: 16px; font-weight: 500; letter-spacing: .5px; text-align: center; }

.status-head { display: flex; align-items: center; justify-content: space-between; height: 32px; margin-bottom: 16px; }
h2 { font-size: 16px; font-weight: 500; letter-spacing: .15px; color: #000; margin-top: -2px; }
time { font-size: 11px; font-weight: 500; letter-spacing: .5px; color: #79747e; margin-right: -1px; }
.alert { height: 92px; border-radius: 6px; background: #ffecb3; box-shadow: 0 1px 2px rgba(0,0,0,.3), 0 1px 3px 1px rgba(0,0,0,.12); display: flex; gap: 19px; padding: 16px 19px; }
.alert svg { margin-top: 3px; }
h3 { font-size: 16px; line-height: 24px; font-weight: 500; letter-spacing: .15px; white-space: nowrap; }
.alert p { width: 264px; font-size: 12px; line-height: 16px; letter-spacing: 0; color: #79747e; margin-top: 4px; }
.warning { margin-top: 16px; height: 200px; border: 1px solid #79747e; border-radius: 6px; padding: 7px 15px; display: flex; gap: 16px; }
.warning svg { margin-top: 4px; }
h4 { font-size: 16px; line-height: 24px; font-weight: 500; letter-spacing: .15px; color: #f3c218; }
.warning p { font-size: 16px; line-height: 24px; letter-spacing: .5px; color: #79747e; margin-top: 4px; white-space: nowrap; }
.fab { position: absolute; left: 1022px; top: 728px; width: 210px; height: 56px; border: 0; border-radius: 16px; background: #eaddff; color: #21005d; fill: #21005d; box-shadow: 0 1px 3px rgba(0,0,0,.3), 0 4px 8px 3px rgba(0,0,0,.15); display: flex; align-items: center; gap: 12px; padding: 0 16px; font: 500 14px/20px Roboto, sans-serif; letter-spacing: .1px; white-space: nowrap; }
```
